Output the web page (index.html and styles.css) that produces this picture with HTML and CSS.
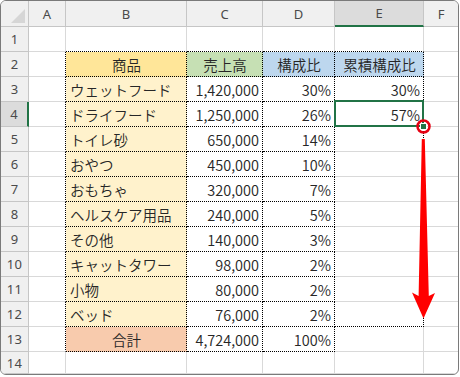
FILE: index.html
```html
<!DOCTYPE html>
<html lang="ja">
<head>
<meta charset="utf-8">
<link rel="stylesheet" href="styles.css">
</head>
<body>
<div class="sheet">
  <div class="grid">
    <div class="c ch corner"><span class="tri"></span></div>
    <div class="c ch">A</div><div class="c ch">B</div><div class="c ch">C</div><div class="c ch">D</div><div class="c ch sel-h">E</div><div class="c ch last">F</div>

    <div class="c rh">1</div><div class="c"></div><div class="c tb"></div><div class="c tb"></div><div class="c tb"></div><div class="c tb"></div><div class="c last"></div>

    <div class="c rh">2</div><div class="c lb"></div><div class="c t gold m">商品</div><div class="c t green m">売上高</div><div class="c t blue m">構成比</div><div class="c t blue m">累積構成比</div><div class="c last"></div>

    <div class="c rh">3</div><div class="c lb"></div><div class="c t cream">ウェットフード</div><div class="c t r">1,420,000</div><div class="c t r">30%</div><div class="c t r">30%</div><div class="c last"></div>

    <div class="c rh sel-r">4</div><div class="c lb"></div><div class="c t cream">ドライフード</div><div class="c t r">1,250,000</div><div class="c t r">26%</div><div class="c t r">57%</div><div class="c last"></div>

    <div class="c rh">5</div><div class="c lb"></div><div class="c t cream">トイレ砂</div><div class="c t r">650,000</div><div class="c t r">14%</div><div class="c ev"></div><div class="c last"></div>

    <div class="c rh">6</div><div class="c lb"></div><div class="c t cream">おやつ</div><div class="c t r">450,000</div><div class="c t r">10%</div><div class="c ev"></div><div class="c last"></div>

    <div class="c rh">7</div><div class="c lb"></div><div class="c t cream">おもちゃ</div><div class="c t r">320,000</div><div class="c t r">7%</div><div class="c ev"></div><div class="c last"></div>

    <div class="c rh">8</div><div class="c lb"></div><div class="c t cream">ヘルスケア用品</div><div class="c t r">240,000</div><div class="c t r">5%</div><div class="c ev"></div><div class="c last"></div>

    <div class="c rh">9</div><div class="c lb"></div><div class="c t cream">その他</div><div class="c t r">140,000</div><div class="c t r">3%</div><div class="c ev"></div><div class="c last"></div>

    <div class="c rh">10</div><div class="c lb"></div><div class="c t cream">キャットタワー</div><div class="c t r">98,000</div><div class="c t r">2%</div><div class="c ev"></div><div class="c last"></div>

    <div class="c rh">11</div><div class="c lb"></div><div class="c t cream">小物</div><div class="c t r">80,000</div><div class="c t r">2%</div><div class="c ev"></div><div class="c last"></div>

    <div class="c rh">12</div><div class="c lb"></div><div class="c t cream">ベッド</div><div class="c t r">76,000</div><div class="c t r">2%</div><div class="c t"></div><div class="c last"></div>

    <div class="c rh">13</div><div class="c lb"></div><div class="c t orange m">合計</div><div class="c t r">4,724,000</div><div class="c t r">100%</div><div class="c"></div><div class="c last"></div>

    <div class="c rh">14</div><div class="c"></div><div class="c"></div><div class="c"></div><div class="c"></div><div class="c"></div><div class="c last"></div>
  </div>
  <svg class="overlay" width="460" height="377" viewBox="0 0 460 377">
    <rect x="335" y="101" width="88" height="25" fill="none" stroke="#217346" stroke-width="2"/>
    <rect x="420.5" y="123.5" width="6" height="6" fill="#217346" stroke="#fff" stroke-width="1"/>
    <circle cx="423.5" cy="126.5" r="6" fill="none" stroke="#e60012" stroke-width="2.5"/>
    <polygon points="421.8,139 424.8,139 428.8,296 435,293 423.5,318.5 412,292.5 418.6,296" fill="#ff0000"/>
  </svg>
</div>
</body>
</html>
```
FILE: styles.css
```css
html, body {
  margin: 0;
  padding: 0;
  background: #ffffff;
}

.sheet {
  position: relative;
  width: 459px;
  height: 375px;
  box-sizing: border-box;
  border: 1px solid #7a7a7a;
  border-radius: 6px;
  overflow: hidden;
  background: #ffffff;
}

.grid {
  display: grid;
  grid-template-columns: 28px 37px 121px 76px 72px 89px 1fr;
  grid-template-rows: 26px repeat(13, 25px) 1fr;
  width: 100%;
  height: 100%;
}

.c {
  box-sizing: border-box;
  border-right: 1px solid #d9d9d9;
  border-bottom: 1px solid #d9d9d9;
  display: flex;
  align-items: center;
  padding: 0 3px 0 4px;
  white-space: nowrap;
  overflow: hidden;
  font-family: "Noto Sans CJK JP", "Noto Sans", sans-serif;
  font-size: 14.5px;
  font-weight: 350;
  color: #262626;
}

.ch, .rh {
  background: #f0f0f0;
  border-right-color: #c6c6c6;
  border-bottom-color: #c6c6c6;
  justify-content: center;
  padding: 0;
  font-family: "Noto Sans", "Noto Sans CJK JP", sans-serif;
  font-size: 13px;
  font-weight: 400;
  color: #4a4a4a;
}

.rh {
  letter-spacing: 0.3px;
}

.corner {
  position: relative;
}

.tri {
  position: absolute;
  right: 3px;
  bottom: 3px;
  width: 0;
  height: 0;
  border-left: 14px solid transparent;
  border-bottom: 14px solid #d6d6d6;
}

.sel-h {
  background: #dcdcdc;
  border-bottom: 2px solid #217346;
}

.sel-r {
  background: #dcdcdc;
  border-right: 2px solid #217346;
}

.last {
  border-right: none;
}

.m { justify-content: center; }
.r { justify-content: flex-end; }

.t {
  border-right: 1px dotted #000;
  border-bottom: 1px dotted #000;
}

.tb {
  border-bottom: 1px dotted #000;
}

.lb {
  border-right: 1px dotted #000;
}

.ev {
  border-right: 1px dotted #000;
}

.gold { background: #ffe699; }
.green { background: #c6e0b4; }
.blue { background: #bdd7ee; }
.cream { background: #fff2cc; }
.orange { background: #f8cbad; }

.overlay {
  position: absolute;
  left: -1px;
  top: -1px;
  pointer-events: none;
}
```
